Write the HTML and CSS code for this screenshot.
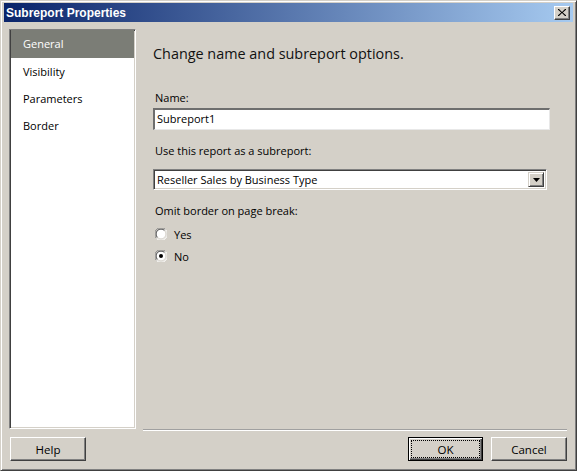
FILE: index.html
```html
<!DOCTYPE html>
<html>
<head>
<meta charset="utf-8">
<link rel="stylesheet" href="styles.css">
</head>
<body>
<div class="window">
  <div class="titlebar">
    <span class="title">Subreport Properties</span>
    <span class="close-btn">
      <svg width="8" height="7" viewBox="0 0 8 7"><path d="M0 0 L1 0 L4 3 L7 0 L8 0 L8 0.8 L4.8 3.5 L8 6.2 L8 7 L7 7 L4 4 L1 7 L0 7 L0 6.2 L3.2 3.5 L0 0.8 Z" fill="#000"/></svg>
    </span>
  </div>
  <div class="main">
    <div class="sidebar">
      <div class="nav-item selected">General</div>
      <div class="nav-item">Visibility</div>
      <div class="nav-item">Parameters</div>
      <div class="nav-item">Border</div>
    </div>
    <div class="content">
      <h1 class="heading">Change name and subreport options.</h1>
      <div class="field">
        <label class="label">Name:</label>
        <div class="textbox">Subreport1</div>
      </div>
      <div class="field">
        <label class="label label-combo">Use this report as a subreport:</label>
        <div class="combo">
          <span class="combo-text">Reseller Sales by Business Type</span>
          <span class="combo-btn">
            <svg width="7" height="4" viewBox="0 0 7 4"><path d="M0 0 H7 L3.5 4 Z" fill="#000"/></svg>
          </span>
        </div>
      </div>
      <div class="field">
        <label class="label label-radio">Omit border on page break:</label>
        <div class="radio-row">
          <svg class="radio" width="12" height="12" viewBox="0 0 12 12">
            <circle cx="6" cy="6" r="5.5" fill="#fff"/>
            <path d="M1.5 10.5 A5.5 5.5 0 0 1 10.5 1.5" stroke="#808080" fill="none"/>
            <path d="M10.5 1.5 A5.5 5.5 0 0 1 1.5 10.5" stroke="#fff" fill="none"/>
            <path d="M2.5 9.5 A4.5 4.5 0 0 1 9.5 2.5" stroke="#404040" fill="none"/>
            <path d="M9.5 2.5 A4.5 4.5 0 0 1 2.5 9.5" stroke="#d4d0c8" fill="none"/>
          </svg>
          <span>Yes</span>
        </div>
        <div class="radio-row">
          <svg class="radio" width="12" height="12" viewBox="0 0 12 12">
            <circle cx="6" cy="6" r="5.5" fill="#fff"/>
            <path d="M1.5 10.5 A5.5 5.5 0 0 1 10.5 1.5" stroke="#808080" fill="none"/>
            <path d="M10.5 1.5 A5.5 5.5 0 0 1 1.5 10.5" stroke="#fff" fill="none"/>
            <path d="M2.5 9.5 A4.5 4.5 0 0 1 9.5 2.5" stroke="#404040" fill="none"/>
            <path d="M9.5 2.5 A4.5 4.5 0 0 1 2.5 9.5" stroke="#d4d0c8" fill="none"/>
            <circle cx="6" cy="6" r="2" fill="#000"/>
          </svg>
          <span>No</span>
        </div>
      </div>
    </div>
  </div>
  <div class="footer">
    <button class="btn">Help</button>
    <div class="spacer"></div>
    <button class="btn default"><span class="focus">OK</span></button>
    <button class="btn">Cancel</button>
  </div>
</div>
</body>
</html>
```

FILE: styles.css
```css
* { box-sizing: border-box; }
html, body { margin: 0; padding: 0; background: #d4d0c8; }
body { font-family: "Open Sans", "Noto Sans", sans-serif; font-size: 11px; color: #000; }

.window {
  width: 577px;
  height: 471px;
  display: flex;
  flex-direction: column;
  background: #d4d0c8;
  border-top: 1px solid #d4d0c8;
  border-left: 1px solid #d4d0c8;
  border-right: 1px solid #404040;
  border-bottom: 1px solid #404040;
  box-shadow: inset 1px 1px #fff, inset -1px -1px #808080;
  padding: 2px 3px 3px 3px;
}

.titlebar {
  height: 19px;
  flex: none;
  display: flex;
  align-items: center;
  justify-content: space-between;
  background: linear-gradient(to right, #0a246a, #a6caf0);
  padding: 0 3px 0 2px;
}
.title {
  color: #fff;
  font-family: "Liberation Sans", Arial, sans-serif;
  font-weight: bold;
  font-size: 12px;
}
.close-btn {
  width: 16px;
  height: 14px;
  display: flex;
  align-items: center;
  justify-content: center;
  background: #d4d0c8;
  border-top: 1px solid #fff;
  border-left: 1px solid #fff;
  border-right: 1px solid #404040;
  border-bottom: 1px solid #404040;
  box-shadow: inset -1px -1px #808080;
}

.main {
  height: 408px;
  flex: none;
  display: flex;
}

.sidebar {
  width: 127px;
  height: 400px;
  margin: 7px 0 0 5px;
  background: #fff;
  border-top: 1px solid #808080;
  border-left: 1px solid #808080;
  border-right: 1px solid #fff;
  border-bottom: 1px solid #fff;
  box-shadow: inset 1px 1px #404040, inset -1px -1px #d4d0c8;
  padding: 0 1px 1px 1px;
}
.nav-item {
  height: 27px;
  line-height: 27px;
  padding-left: 12px;
  color: #000;
}
.nav-item.selected {
  background: #7b7d76;
  color: #fff;
  height: 28px;
  line-height: 28px;
}

.content {
  flex: 1;
  margin: 0 6px 0 7px;
  height: 408px;
  border-bottom: 1px solid #a0a0a0;
  box-shadow: 0 1px #fff;
  padding: 21px 0 0 10px;
}
.heading {
  margin: 0 0 25px 0;
  font-weight: normal;
  font-size: 14.4px;
  color: #111;
  line-height: 22px;
}
.field { margin-bottom: 13px; }
.label {
  display: block;
  line-height: 16px;
  margin: 0 0 2px 2px;
}
.textbox {
  height: 22px;
  width: 397px;
  background: #fff;
  border-top: 2px solid #6e6e6e;
  border-left: 2px solid #6e6e6e;
  border-right: 1px solid #e8e8e8;
  border-bottom: 1px solid #e8e8e8;
  padding-left: 2px;
  line-height: 18px;
}
.label.label-combo { margin-bottom: 10px; }
.combo {
  width: 394px;
  height: 21px;
  display: flex;
  align-items: center;
  background: #fff;
  border-top: 1px solid #808080;
  border-left: 1px solid #808080;
  border-right: 1px solid #fff;
  border-bottom: 1px solid #fff;
  box-shadow: inset 1px 1px #404040, inset -1px -1px #d4d0c8;
  padding: 2px 2px 2px 3px;
}
.combo-text { flex: 1; line-height: 15px; }
.combo-btn {
  width: 16px;
  height: 15px;
  display: flex;
  align-items: center;
  justify-content: center;
  background: #d4d0c8;
  border-top: 1px solid #d4d0c8;
  border-left: 1px solid #d4d0c8;
  border-right: 1px solid #404040;
  border-bottom: 1px solid #404040;
  box-shadow: inset 1px 1px #fff, inset -1px -1px #808080;
}
.label.label-radio { margin-bottom: 4px; }
.radio-row {
  display: flex;
  align-items: center;
  gap: 7px;
  height: 22px;
  padding-left: 2px;
}
.radio { flex: none; }

.footer {
  flex: 1;
  display: flex;
  align-items: flex-start;
  padding: 7px 6px 0 6px;
  gap: 8px;
}
.spacer { flex: 1; }
.btn {
  width: 76px;
  height: 24px;
  font-family: inherit;
  font-size: 11.5px;
  color: #000;
  background: #d4d0c8;
  border-top: 1px solid #fff;
  border-left: 1px solid #fff;
  border-right: 1px solid #404040;
  border-bottom: 1px solid #404040;
  box-shadow: inset -1px -1px #808080;
  padding: 0;
  display: flex;
  align-items: center;
  justify-content: center;
}
.btn.default {
  width: 75px;
  border: 1px solid #000;
  box-shadow: inset 1px 1px #fff, inset -1px -1px #404040, inset -2px -2px #808080;
  padding: 3px;
}
.focus {
  flex: 1;
  align-self: stretch;
  display: flex;
  align-items: center;
  justify-content: center;
  outline: 1px dotted #000;
}
```
